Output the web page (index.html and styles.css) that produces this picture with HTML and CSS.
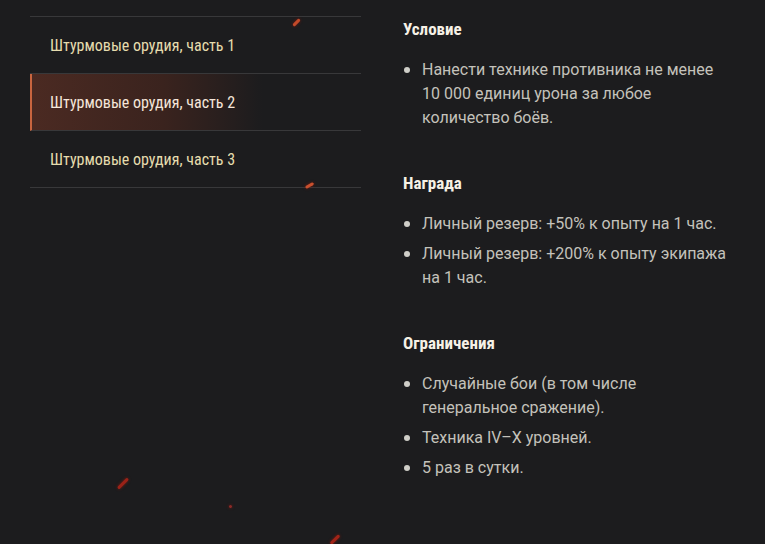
FILE: index.html
```html
<!DOCTYPE html>
<html lang="ru">
<head>
<meta charset="utf-8">
<link rel="stylesheet" href="styles.css">
</head>
<body>
<div class="page">
  <nav class="menu">
    <div class="menu-item">Штурмовые орудия, часть 1</div>
    <div class="menu-item active">Штурмовые орудия, часть 2</div>
    <div class="menu-item">Штурмовые орудия, часть 3</div>
  </nav>
  <main class="details">
    <section class="block">
      <h3 class="title">Условие</h3>
      <ul class="list">
        <li>Нанести технике противника не менее 10&nbsp;000 единиц урона за любое количество боёв.</li>
      </ul>
    </section>
    <section class="block">
      <h3 class="title">Награда</h3>
      <ul class="list">
        <li>Личный резерв: +50% к опыту на 1 час.</li>
        <li>Личный резерв: +200% к опыту экипажа на 1 час.</li>
      </ul>
    </section>
    <section class="block">
      <h3 class="title">Ограничения</h3>
      <ul class="list">
        <li>Случайные бои (в том числе генеральное сражение).</li>
        <li>Техника IV–X уровней.</li>
        <li>5 раз в сутки.</li>
      </ul>
    </section>
  </main>
  <span class="spark s1"></span>
  <span class="spark s2"></span>
  <span class="spark s3"></span>
  <span class="spark s4"></span>
  <span class="spark s5"></span>
</div>
</body>
</html>
```

FILE: styles.css
```css
html, body {
  margin: 0;
  padding: 0;
  background: #1c1c1e;
}
body {
  width: 765px;
  height: 544px;
  overflow: hidden;
}
.page {
  position: relative;
  display: flex;
  height: 544px;
  padding: 16px 0 0 30px;
  box-sizing: border-box;
  gap: 42px;
}
.menu {
  width: 331px;
  flex: none;
  border-top: 1px solid #38383a;
  align-self: flex-start;
}
.menu-item {
  height: 56px;
  border-bottom: 1px solid #38383a;
  display: flex;
  align-items: center;
  padding-left: 20px;
  box-sizing: content-box;
  font-family: "Roboto Condensed", "Liberation Sans Narrow", "DejaVu Sans Condensed", "Roboto", sans-serif;
  font-stretch: condensed;
  font-size: 16px;
  color: #e6dcae;
}
.menu-item.active {
  padding-left: 18px;
  border-left: 2px solid #c9653f;
  color: #f5e6da;
  background: linear-gradient(90deg, #4b2a22 0%, #3a231e 40%, rgba(28,28,30,0) 70%);
}
.details {
  width: 330px;
  padding-top: 2px;
}
.block {
  margin-bottom: 42px;
}
.title {
  margin: 0 0 18px 0;
  font-family: "Roboto Condensed", "Liberation Sans Narrow", "DejaVu Sans Condensed", "Roboto", sans-serif;
  font-stretch: condensed;
  font-weight: 700;
  font-size: 17px;
  line-height: 22px;
  color: #f6f1e6;
}
.list {
  list-style: none;
  margin: 0;
  padding: 0;
}
.list li {
  position: relative;
  padding-left: 19px;
  margin-bottom: 6px;
  font-family: "Roboto", sans-serif;
  font-size: 16px;
  line-height: 24px;
  color: #c4c2bb;
}
.list li::before {
  content: "";
  position: absolute;
  left: 1px;
  top: 9px;
  width: 6px;
  height: 6px;
  border-radius: 50%;
  background: #cfcec8;
}
.spark {
  position: absolute;
  width: 9px;
  height: 3px;
  border-radius: 2px;
  background: #b8301e;
  box-shadow: 0 0 3px #7a1a10;
  transform: rotate(-45deg);
}
.s1 { left: 292px; top: 21px; background: #c24a2a; }
.s2 { left: 305px; top: 184px; transform: rotate(-30deg); background: #c8502e; }
.s3 { left: 116px; top: 482px; width: 14px; background: #9a2218; }
.s4 { left: 229px; top: 505px; width: 3px; height: 3px; background: #8a2a28; }
.s5 { left: 329px; top: 538px; width: 12px; background: #a02418; }
```
